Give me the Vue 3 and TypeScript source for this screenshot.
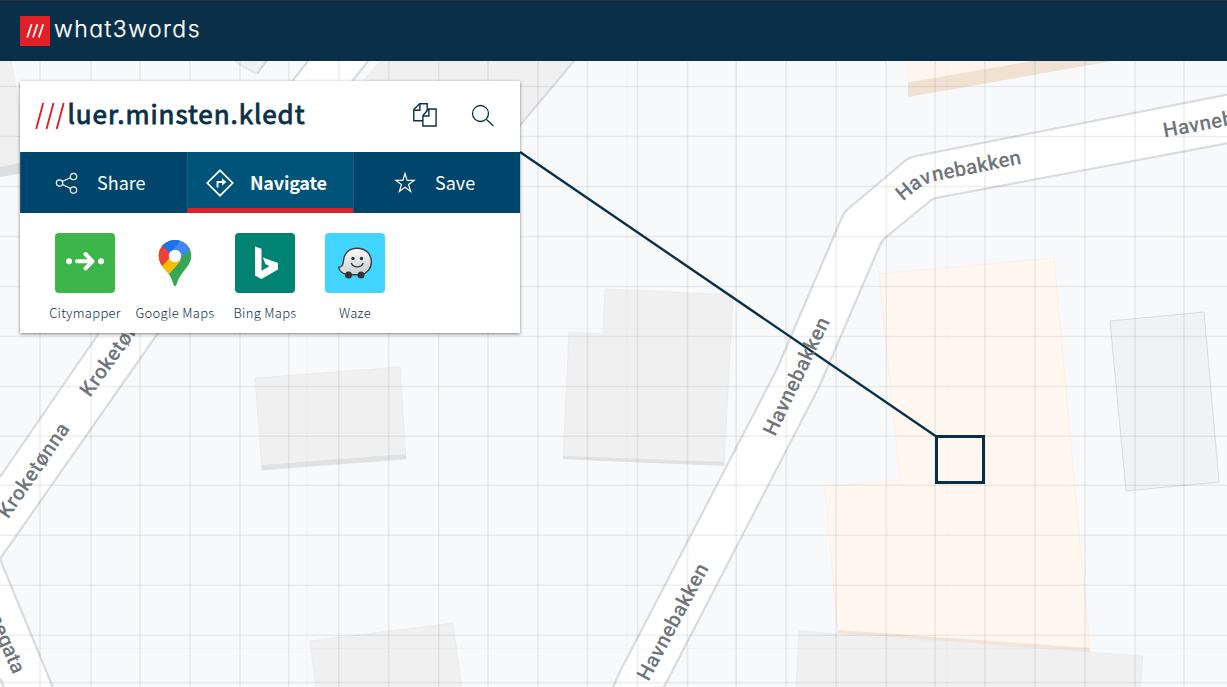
<script setup lang="ts">
const verticals: number[] = [40, 91, 140, 190, 240, 288.7, 338.7, 388.7, 438.7, 488, 538, 587.5, 637.5, 687.5, 736.2, 786.2, 836.2, 886.3, 935, 985, 1035, 1085, 1135, 1184]
const horizontals: number[] = [86.5, 136.5, 186.5, 236.5, 286.5, 336.5, 386.5, 436.3, 485.2, 535.2, 585.2, 635.2, 682.5]
const roadLabels = [
  { text: 'Havnebakken', x: 775, y: 437, angle: -64.5, length: 128 },
  { text: 'Havnebakken', x: 648.5, y: 682, angle: -62, length: 129 },
  { text: 'Kroketønna', x: 8, y: 519.5, angle: -55.5, length: 110 },
  { text: 'Kroketønna', x: 90, y: 398, angle: -54.5, length: 109 },
  { text: 'Havnebakken', x: 1164.5, y: 137.5, angle: -10.5, length: 128 },
]
</script>

<template>
  <div class="screen">
    <header class="topbar">
      <svg class="brand-mark" viewBox="0 0 30 30"><path d="M0 0H30V30H0Z" fill="#e11f26" /><path d="M7.200 21.500 11.600 8.300M13 21.500 17.400 8.300M18.800 21.500 23.200 8.300" stroke="#fff" stroke-width="1.800" /></svg>
      <svg class="brand-name" viewBox="0 0 160 40"><text x="-1" y="21" textLength="145.500" lengthAdjust="spacing">what3words</text></svg>
    </header>

    <main class="stage">
      <svg class="map" viewBox="0 61 1227 626">
        <g class="building">
          <path d="M-2 59H11L29 168 -2 174Z" />
          <path d="M383 59H576L500 149 350 120 360 84Z" />
          <path d="M255 378 400 367 406 459 262 470Z" />
          <path d="M605 289 733 295 724 465 563 459 569 332 603 334Z" />
          <path d="M310 641 453 623 462 690H316Z" />
        </g>
        <path d="M0 167 30 161V172L0 177Z" fill="#dcdfe1" />
        <path d="M234 60 256 72V75L236 63Z" fill="#e3e5e6" />
        <path d="M234 60 257 72 266 60Z" fill="#eff0f0" />
        <path d="M257 74 267 60" class="kerb" />
        <path d="M262 465 406 454V459L262 470Z" fill="#e0e1e2" />
        <path d="M563 456 724 462V466L563 459Z" fill="#e0e1e2" />
        <path d="M1110 321 1204 312 1219 482 1126 491Z" fill="#f1f2f3" stroke="#d9dbde" />

        <path d="M308 61H368L350 84H290Z" fill="#fff" />
        <path d="M99 333H158L0 559 54 690H-20V500L0 477Z" fill="#fff" />
        <g class="road">
          <path d="M308 61 290 84M368 61 350 84M99 333 0 477M158 333 0 559 54 690M0 678 5 690" />
          <path class="surface" d="M1240 92 916 156Q910 157 906 160L848 209Q844 212 842 217L777 369 625 662Q620 670 612 690L604 710 652 710 664 687 819 387 880 245Q882 240 886 237L930 201Q932 199 936 198L1240 141Z" />
          <path d="M574 61 500 149" />
        </g>

        <path d="M904 61H1050L908 83Z" fill="#fff5ec" />
        <path d="M908 82.5 1032 61H1113L908 97Z" fill="#f1e1d2" />
        <path d="M799 631 1143 656 1140 690H796Z" fill="#f0f0f0" stroke="#e7e8e9" stroke-width=".7" />
        <path d="M879 274 1054 258 1072 457 1090 650 838 633 825 487 900 480Z" class="place" />
        <path d="M838 630 1090 648V652L838 633Z" fill="#f2e4d8" />

        <g class="grid">
          <line v-for="x in verticals" :key="`v${x}`" :x1="x" y1="61" :x2="x" y2="687" />
          <line v-for="y in horizontals" :key="`h${y}`" x1="0" :y1="y" x2="1227" :y2="y" />
        </g>
        <path class="tiles" d="M306.5 61V687M626.5 61V687M946.5 61V687M0 328.5H1227M0 648.5H1227" />

        <path d="M520 152 937 437" stroke="#0a3049" stroke-width="2.4" />
        <g class="road-name">
          <text
            v-for="(label, i) in roadLabels"
            :key="i"
            :transform="`translate(${label.x} ${label.y}) rotate(${label.angle})`"
            :textLength="label.length"
          >{{ label.text }}</text>
          <path id="bend" d="M903 201.500 916 190.500Q924 184 936 181L1040 160" fill="none" />
          <text><textPath href="#bend" textLength="127">Havnebakken</textPath></text>
          <text transform="translate(13 675) rotate(67)" text-anchor="end">Strømnegata</text>
        </g>
        <path d="M936.5 436.5H983.5V482.5H936.5Z" fill="none" stroke="#0a3049" stroke-width="3" />
      </svg>

      <section class="panel">
        <div class="address">
          <svg class="slashes" viewBox="0 0 30 28"><path d="M1.200 27 8.200 1M11.500 27 18.500 1M21.700 27 28.700 1" stroke="#e11f26" stroke-width="1.900" /></svg>
          <h1><svg viewBox="0 0 240 40"><text x="-.5" y="27" textLength="237" lengthAdjust="spacing">luer.minsten.kledt</text></svg></h1>
          <svg class="copy" viewBox="0 0 26 26"><g fill="#fff" stroke="#0a3049" stroke-width="1.400"><path d="M1.800 7.500 7.700 1.700H15.200V18.700H1.800Z" /><path d="M1.800 8.300H7.900V1.700" fill="none" /><path d="M10.900 13.500 16.700 7H24.100V24H10.900Z" /><path d="M10.900 14H16.900V7" fill="none" /></g></svg>
          <svg class="search" viewBox="0 0 24 24"><path d="M15.500 15.500 22.500 22" /><circle cx="9.500" cy="9.500" r="8" /></svg>
        </div>

        <nav class="tabs">
          <button class="tab share">
            <svg viewBox="0 0 24 24"><path d="m7 10.500 9-4M7 13.200l9 4.500" /><circle cx="4.500" cy="12" r="3.200" /><circle cx="18.500" cy="5.500" r="3.200" /><circle cx="18.500" cy="19" r="3.200" /></svg>
            <span>Share</span>
          </button>
          <button class="tab navigate">
            <svg viewBox="0 0 28 28"><path d="M14 1.300 26.700 14 14 26.700 1.300 14Z" stroke-width="1.700" /><path d="M11.500 18.500V13H18" stroke-width="1.800" /><path d="M16 9.300 20.300 13 16 16.700Z" fill="#fff" stroke="none" /></svg>
            <span>Navigate</span>
          </button>
          <button class="tab save">
            <svg viewBox="0 0 24 24"><path d="m12 2.500 2.150 6.900h7l-5.600 4.200 2.100 6.900-5.650-4.200-5.650 4.200 2.100-6.900-5.600-4.200h7Z" /></svg>
            <span>Save</span>
          </button>
        </nav>

        <div class="apps">
          <a class="app">
            <svg viewBox="0 0 60 60"><rect width="60" height="60" rx="4" fill="#3eb54a" /><circle cx="14" cy="28.300" r="3" fill="#fff" /><circle cx="46" cy="28.300" r="3" fill="#fff" /><path d="M22 28.300H36M30.500 21 37.500 28.300 30.500 35.300" fill="none" stroke="#fff" stroke-width="4" stroke-linecap="round" stroke-linejoin="round" /></svg>
            <span>Citymapper</span>
          </a>
          <a class="app">
            <svg viewBox="0 0 60 60">
              <clipPath id="pin"><path d="M30 7C20.800 7 13.700 14 13.700 22.800 13.700 30 18 34 21.800 38.500 26 43.500 27 47 28.500 51.500 29.100 53.600 30.900 53.600 31.500 51.500 33 46.500 35 43 38.500 38.500 42 34 46.300 29.500 46.300 22.800 46.300 14 39.200 7 30 7Z" /></clipPath>
              <g clip-path="url(#pin)"><path d="M0 0H60V60H0Z" fill="#34a853" /><path d="M10 37 25.500 18 36 27.500 19 47Z" fill="#fbbc04" /><path d="M6 3 29 20 14.500 36 8 32Z" fill="#ea4335" /><path d="M10 6 30 0 40 3 25.500 20.500Z" fill="#1a73e8" /><path d="M38.500 4 24 21.500 33 29 48 12.500Z" fill="#4285f4" /></g>
              <circle cx="30" cy="23" r="6.200" fill="#fff" />
            </svg>
            <span>Google Maps</span>
          </a>
          <a class="app">
            <svg viewBox="0 0 60 60"><rect width="60" height="60" rx="4" fill="#008373" /><path d="M20 13.500 26.500 15.800V37.800L34.500 33 30.500 31.200 27.800 24.500 43 30V36.500L26.500 46 20 42.400Z" fill="#fff" /></svg>
            <span>Bing Maps</span>
          </a>
          <a class="app">
            <svg viewBox="0 0 60 60">
              <defs><linearGradient id="ghost" x1="0" y1="0" x2=".2" y2="1"><stop stop-color="#fff" /><stop offset="1" stop-color="#cdd2d5" /></linearGradient></defs>
              <rect width="60" height="60" rx="4" fill="#41d5ff" />
              <path d="M32 15.200C24 15.200 19 20.500 18.500 27.500 18.300 31.500 17.500 34 13.700 34.300 14.200 38 18 41 23 41.700H36C42 40.500 46.400 35.500 46.400 29 46.400 21 40.500 15.200 32 15.200Z" fill="url(#ghost)" stroke="#3a3d40" stroke-width="1.400" />
              <circle cx="28" cy="25.500" r="1.700" fill="#333" /><circle cx="36.500" cy="25.500" r="1.700" fill="#333" /><path d="M26.500 30.500C28.500 35 36 35 38 30.500" fill="none" stroke="#333" stroke-width="1.400" stroke-linecap="round" />
              <circle cx="23.500" cy="42" r="3.500" fill="#333" /><circle cx="36" cy="42" r="3.500" fill="#333" />
            </svg>
            <span>Waze</span>
          </a>
        </div>
      </section>
    </main>
  </div>
</template>

<style>
body { margin: 0; overflow: hidden; }
</style>

<style scoped>
.screen { width: 1227px; height: 687px; overflow: hidden; font-family: "Noto Sans CJK SC", "Open Sans", sans-serif; color: #0a3049; }
.topbar { box-sizing: border-box; height: 61px; padding: 15px 20px 0; background: #0a3049; border-top: 1px solid #2b2f3b; display: flex; gap: 5px; }
.brand-mark { width: 30px; height: 30px; }
.brand-name { width: 160px; height: 40px; overflow: visible; }
.brand-name text { font: 300 23px Inter, sans-serif; font-feature-settings: "cv11"; fill: #fff; stroke: #fff; stroke-width: .25px; }
.stage { position: relative; width: 1227px; height: 626px; }
.map { display: block; width: 1227px; height: 626px; background: #f8f9fb; }
.building path { fill: #f0f0f0; stroke: #e7e8e9; stroke-width: .7; }
.kerb { fill: none; stroke: #d3d5d9; stroke-width: 2; }
.road path { fill: none; stroke: #dadbdf; stroke-width: 2.2; }
.road .surface { fill: #fff; }
.place { fill: #fff7f0; stroke: #fcebdc; stroke-width: .7; }
.grid line { stroke: #000; stroke-opacity: .065; stroke-width: 1.6; }
.tiles { stroke: #000; stroke-opacity: .018; }
.road-name text { font: 500 20.500px Roboto, sans-serif; fill: #6f757b; }
.panel { position: absolute; left: 20px; top: 20px; width: 500px; height: 252px; background: #fff; box-shadow: 0 1px 3px rgba(0, 0, 0, .5); }
.address { height: 71px; display: flex; align-items: flex-start; }
.slashes { width: 30px; height: 28px; margin: 21px 0 0 15px; }
h1 { margin: 16px 0 0 3px; width: 240px; height: 40px; font-size: 0; }
h1 svg { width: 240px; height: 40px; overflow: visible; }
h1 text { font-size: 26px; font-weight: 400; fill: #0a3049; stroke: #0a3049; stroke-width: .9px; }
.copy { width: 26px; height: 26px; margin: 21px 0 0 104px; }
.search { width: 24px; height: 24px; margin: 23px 0 0 33px; fill: none; stroke: #0a3049; stroke-width: 1.300; }
.tabs { height: 61px; display: grid; grid-template-columns: 167px 166px 167px; background: #00456b; }
.tab { box-sizing: border-box; border: 0; border-left: 1px solid #1d5b7c; padding: 0; background: none; color: #fff; display: flex; align-items: center; font: 400 18px "Noto Sans CJK SC", sans-serif; }
.tab svg { width: 24px; height: 24px; fill: none; stroke: #fff; stroke-width: 1.200; flex: none; }
.tab span { margin-top: -2px; }
.share { padding-left: 34px; gap: 18px; }
.navigate { padding: 5px 0 0 18px; gap: 16px; background: #005379; border-bottom: 5px solid #e11f26; font-weight: 700; letter-spacing: -.2px; }
.navigate svg { width: 28px; height: 28px; }
.save { padding-left: 39px; gap: 18px; }
.apps { display: flex; padding: 20px 0 0 20px; }
.app { width: 90px; display: flex; flex-direction: column; align-items: center; font-size: 13px; font-weight: 300; letter-spacing: .3px; line-height: 20px; white-space: nowrap; }
.app svg { width: 60px; height: 60px; margin-bottom: 10px; }
</style>
